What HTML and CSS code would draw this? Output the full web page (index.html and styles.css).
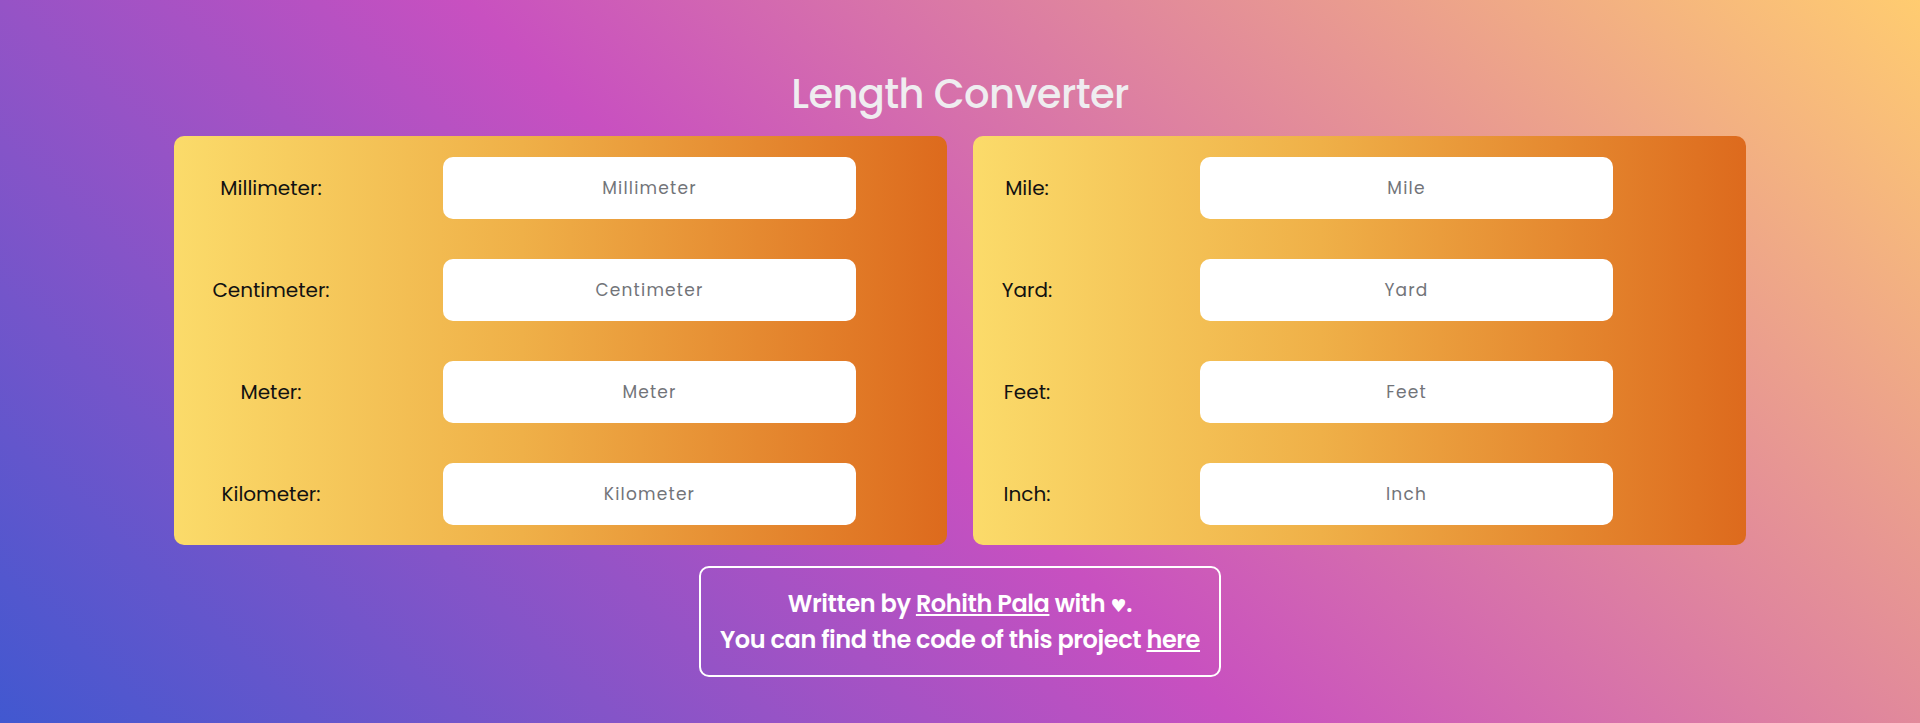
FILE: index.html
```html
<!DOCTYPE html>
<html lang="en">
<head>
<meta charset="utf-8">
<title>Length Converter</title>
<link rel="stylesheet" href="styles.css">
</head>
<body>
<main class="page">
  <h1 class="title">Length Converter</h1>
  <div class="panels">
    <section class="panel panel-metric">
      <label class="label" for="mm">Millimeter:</label>
      <input class="field" id="mm" type="text" placeholder="Millimeter">
      <label class="label" for="cm">Centimeter:</label>
      <input class="field" id="cm" type="text" placeholder="Centimeter">
      <label class="label" for="m">Meter:</label>
      <input class="field" id="m" type="text" placeholder="Meter">
      <label class="label" for="km">Kilometer:</label>
      <input class="field" id="km" type="text" placeholder="Kilometer">
    </section>
    <section class="panel panel-imperial">
      <label class="label" for="mi">Mile:</label>
      <input class="field" id="mi" type="text" placeholder="Mile">
      <label class="label" for="yd">Yard:</label>
      <input class="field" id="yd" type="text" placeholder="Yard">
      <label class="label" for="ft">Feet:</label>
      <input class="field" id="ft" type="text" placeholder="Feet">
      <label class="label" for="in">Inch:</label>
      <input class="field" id="in" type="text" placeholder="Inch">
    </section>
  </div>
  <footer class="credits">
    <p class="credits-line">Written by <a class="credits-link" href="#">Rohith Pala</a> with <span class="heart">♥</span>.</p>
    <p class="credits-line">You can find the code of this project <a class="credits-link" href="#">here</a></p>
  </footer>
</main>
</body>
</html>
```
FILE: styles.css
```css
html, body {
  margin: 0;
  padding: 0;
  height: 100%;
}

body {
  background: linear-gradient(43deg, #4158D0 0%, #C850C0 46%, #FFCC70 100%);
  font-family: "Poppins", "Inter", "Noto Sans", sans-serif;
  overflow: hidden;
}

.page {
  display: flex;
  flex-direction: column;
  align-items: center;
  padding-top: 70px;
}

.title {
  margin: 0;
  font-size: 40px;
  line-height: 48px;
  font-weight: 500;
  color: #efedf0;
  letter-spacing: -0.6px;
}

.panels {
  display: flex;
  gap: 26px;
  margin-top: 18px;
}

.panel {
  width: 773px;
  box-sizing: border-box;
  height: 409px;
  padding: 21px 0 20px 0;
  border-radius: 10px;
  background: linear-gradient(90deg, #fbdb6a 0%, #efb048 45%, #dd6a1d 100%);
  display: grid;
  grid-auto-rows: 62px;
  row-gap: 40px;
  align-items: center;
}

.panel-metric {
  grid-template-columns: 194px 413px;
  column-gap: 75px;
}

.panel-imperial {
  grid-template-columns: 108px 413px;
  column-gap: 119px;
}

.label {
  text-align: center;
  font-size: 20px;
  color: #111;
}

.field {
  height: 62px;
  box-sizing: border-box;
  border: none;
  border-radius: 10px;
  background: #fff;
  text-align: center;
  font-family: inherit;
  font-size: 17px;
  letter-spacing: 1.2px;
  outline: none;
}

.field::placeholder {
  color: #727479;
}

.credits {
  margin-top: 21px;
  width: 522px;
  height: 111px;
  box-sizing: border-box;
  border: 2px solid #fff;
  border-radius: 10px;
  display: flex;
  flex-direction: column;
  justify-content: center;
  align-items: center;
  color: #fff;
  font-weight: 600;
  font-size: 24px;
  letter-spacing: -0.4px;
}

.credits-line {
  margin: 0;
  line-height: 34px;
}

.credits-link {
  color: #fff;
  text-decoration: underline;
}

.heart {
  font-family: "DejaVu Sans", sans-serif;
  font-size: 18px;
}
```
